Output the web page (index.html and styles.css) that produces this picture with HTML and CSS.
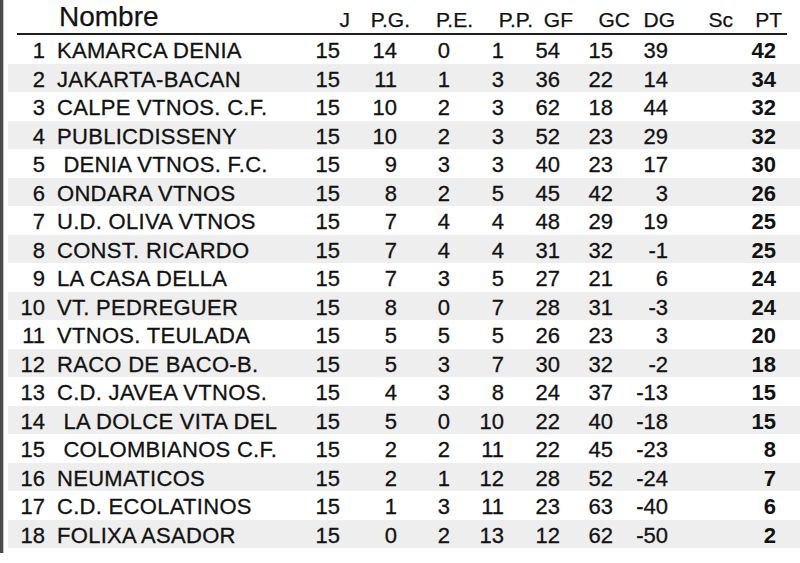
FILE: index.html
```html
<!DOCTYPE html>
<html lang="es">
<head>
<meta charset="utf-8">
<title>Clasificación</title>
<link rel="stylesheet" href="styles.css">
</head>
<body>
<div class="sheet">
  <div class="inner">
    <div class="head">
      <span></span>
      <span class="h-name">Nombre</span>
      <span class="h">J</span>
      <span class="h">P.G.</span>
      <span class="h">P.E.</span>
      <span class="h">P.P.</span>
      <span class="h">GF</span>
      <span class="h">GC</span>
      <span class="h">DG</span>
      <span class="h">Sc</span>
      <span class="h">PT</span>
    </div>
    <div class="rows">
      <div class="row"><span>1</span><span class="name">KAMARCA DENIA</span><span>15</span><span>14</span><span>0</span><span>1</span><span>54</span><span>15</span><span>39</span><span></span><span class="pt">42</span></div>
      <div class="row"><span>2</span><span class="name">JAKARTA-BACAN</span><span>15</span><span>11</span><span>1</span><span>3</span><span>36</span><span>22</span><span>14</span><span></span><span class="pt">34</span></div>
      <div class="row"><span>3</span><span class="name">CALPE VTNOS. C.F.</span><span>15</span><span>10</span><span>2</span><span>3</span><span>62</span><span>18</span><span>44</span><span></span><span class="pt">32</span></div>
      <div class="row"><span>4</span><span class="name">PUBLICDISSENY</span><span>15</span><span>10</span><span>2</span><span>3</span><span>52</span><span>23</span><span>29</span><span></span><span class="pt">32</span></div>
      <div class="row"><span>5</span><span class="name"> DENIA VTNOS. F.C.</span><span>15</span><span>9</span><span>3</span><span>3</span><span>40</span><span>23</span><span>17</span><span></span><span class="pt">30</span></div>
      <div class="row"><span>6</span><span class="name">ONDARA VTNOS</span><span>15</span><span>8</span><span>2</span><span>5</span><span>45</span><span>42</span><span>3</span><span></span><span class="pt">26</span></div>
      <div class="row"><span>7</span><span class="name">U.D. OLIVA VTNOS</span><span>15</span><span>7</span><span>4</span><span>4</span><span>48</span><span>29</span><span>19</span><span></span><span class="pt">25</span></div>
      <div class="row"><span>8</span><span class="name">CONST. RICARDO</span><span>15</span><span>7</span><span>4</span><span>4</span><span>31</span><span>32</span><span>-1</span><span></span><span class="pt">25</span></div>
      <div class="row"><span>9</span><span class="name">LA CASA DELLA</span><span>15</span><span>7</span><span>3</span><span>5</span><span>27</span><span>21</span><span>6</span><span></span><span class="pt">24</span></div>
      <div class="row"><span>10</span><span class="name">VT. PEDREGUER</span><span>15</span><span>8</span><span>0</span><span>7</span><span>28</span><span>31</span><span>-3</span><span></span><span class="pt">24</span></div>
      <div class="row"><span>11</span><span class="name">VTNOS. TEULADA</span><span>15</span><span>5</span><span>5</span><span>5</span><span>26</span><span>23</span><span>3</span><span></span><span class="pt">20</span></div>
      <div class="row"><span>12</span><span class="name">RACO DE BACO-B.</span><span>15</span><span>5</span><span>3</span><span>7</span><span>30</span><span>32</span><span>-2</span><span></span><span class="pt">18</span></div>
      <div class="row"><span>13</span><span class="name">C.D. JAVEA VTNOS.</span><span>15</span><span>4</span><span>3</span><span>8</span><span>24</span><span>37</span><span>-13</span><span></span><span class="pt">15</span></div>
      <div class="row"><span>14</span><span class="name"> LA DOLCE VITA DEL</span><span>15</span><span>5</span><span>0</span><span>10</span><span>22</span><span>40</span><span>-18</span><span></span><span class="pt">15</span></div>
      <div class="row"><span>15</span><span class="name"> COLOMBIANOS C.F.</span><span>15</span><span>2</span><span>2</span><span>11</span><span>22</span><span>45</span><span>-23</span><span></span><span class="pt">8</span></div>
      <div class="row"><span>16</span><span class="name">NEUMATICOS</span><span>15</span><span>2</span><span>1</span><span>12</span><span>28</span><span>52</span><span>-24</span><span></span><span class="pt">7</span></div>
      <div class="row"><span>17</span><span class="name">C.D. ECOLATINOS</span><span>15</span><span>1</span><span>3</span><span>11</span><span>23</span><span>63</span><span>-40</span><span></span><span class="pt">6</span></div>
      <div class="row"><span>18</span><span class="name">FOLIXA ASADOR</span><span>15</span><span>0</span><span>2</span><span>13</span><span>12</span><span>62</span><span>-50</span><span></span><span class="pt">2</span></div>
    </div>
  </div>
</div>
</body>
</html>
```
FILE: styles.css
```css
html, body {
  margin: 0;
  padding: 0;
  background: #ffffff;
}
body {
  width: 800px;
  height: 563px;
  overflow: hidden;
  font-family: "Liberation Sans", Arial, sans-serif;
  color: #121212;
}
.sheet {
  border-left: 3px solid #4b4b4b;
  height: 553px;
}
.inner {
  border-left: 1px solid #c4c4c4;
  height: 553px;
}
.head {
  margin-left: 13px;
  width: 770px;
  height: 33px;
  border-bottom: 2px solid #1e1e1e;
  display: grid;
  grid-template-columns: 42px 261px 30px 60px 63px 60px 40px 57px 45px 58px 49px 1fr;
  align-items: end;
  -webkit-text-stroke: 0.25px #121212;
}
.h-name {
  font-size: 28px;
  line-height: 28px;
  padding-bottom: 2px;
}
.h {
  font-size: 21px;
  line-height: 21px;
  padding-bottom: 3px;
  text-align: right;
}
.rows {
  margin-left: 4px;
}
.row {
  height: 28.53px;
  box-sizing: border-box;
  padding-top: 4px;
  line-height: 24.5px;
  font-size: 22px;
  display: grid;
  grid-template-columns: 37px 255px 40px 57px 53px 54px 56px 53px 55px 65px 43px 1fr;
  text-align: right;
  white-space: pre;
  -webkit-text-stroke: 0.3px #121212;
}
.row:nth-child(even) {
  background: #eeeeee;
}
.row .name {
  text-align: left;
  padding-left: 12px;
  letter-spacing: 0.3px;
}
.row .pt {
  font-weight: bold;
  -webkit-text-stroke: 0;
}
```
